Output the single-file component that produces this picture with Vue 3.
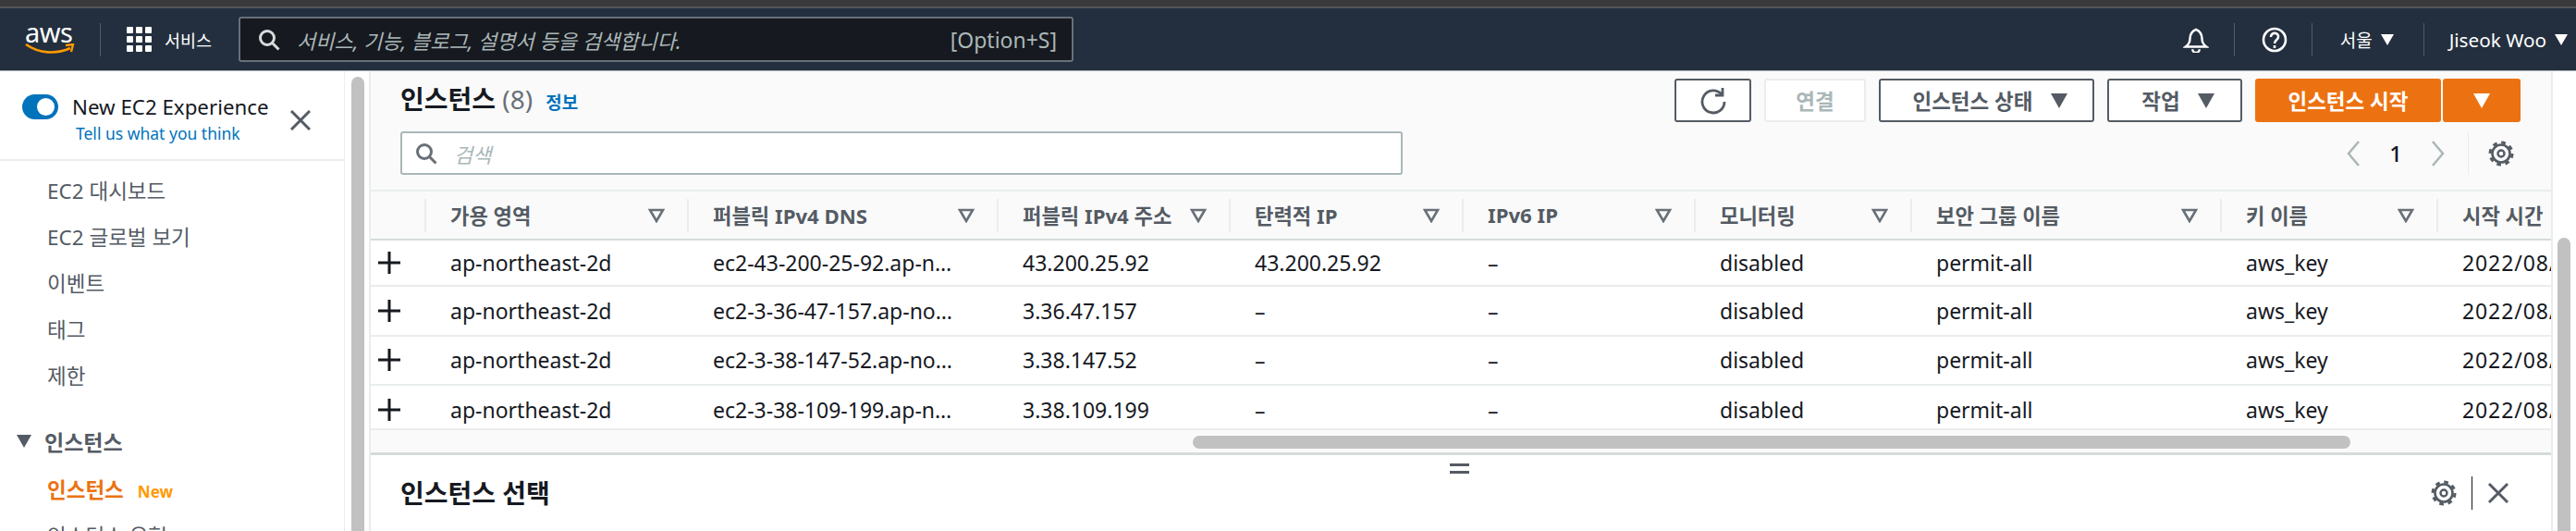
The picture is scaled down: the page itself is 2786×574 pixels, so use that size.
<script setup>
const nav = ["EC2 대시보드", "EC2 글로벌 보기", "이벤트", "태그", "제한"];
const cols = [
  "가용 영역",
  "퍼블릭 IPv4 DNS",
  "퍼블릭 IPv4 주소",
  "탄력적 IP",
  "IPv6 IP",
  "모니터링",
  "보안 그룹 이름",
  "키 이름",
  "시작 시간",
];
const rows = [
  ["ec2-43-200-25-92.ap-n…", "43.200.25.92", "43.200.25.92"],
  ["ec2-3-36-47-157.ap-no…", "3.36.47.157", "–"],
  ["ec2-3-38-147-52.ap-no…", "3.38.147.52", "–"],
  ["ec2-3-38-109-199.ap-n…", "3.38.109.199", "–"],
];
</script>

<template>
  <div class="page">
    <div class="strip"></div>
    <header class="topbar">
      <div class="logo">
        <span class="logo-text">aws</span>
        <svg viewBox="0 0 54 13" width="54" height="13" fill="none" stroke="#f90">
          <path d="M1 1c14 10 33 11 48 4" stroke-width="2.6" />
          <path d="M44 2l8-1-2 8" stroke-width="2.4" />
        </svg>
      </div>
      <span class="top-sep"></span>
      <svg class="grid-icon" viewBox="0 0 27 27" width="27" height="27">
        <g fill="#fff">
          <rect v-for="c in 9" :key="c" :x="((c - 1) % 3) * 10" :y="Math.floor((c - 1) / 3) * 10" width="7" height="7" rx="1" />
        </g>
      </svg>
      <span class="services">서비스</span>
      <div class="global-search">
        <svg viewBox="0 0 24 24" width="24" height="24" fill="none" stroke="#d5dbdb" stroke-width="3">
          <circle cx="10" cy="10" r="7.5" />
          <path d="M15.5 15.5l7 7" />
        </svg>
        <span class="global-ph">서비스, 기능, 블로그, 설명서 등을 검색합니다.</span>
        <span class="shortcut">[Option+S]</span>
      </div>
      <div class="top-right">
        <svg class="bell" viewBox="0 0 28 30" width="28" height="28" fill="none" stroke="#fff" stroke-width="2.6">
          <path d="M14 3c-5 2-7 6-7 11 0 4-2 7-5 9h24c-3-2-5-5-5-9 0-5-2-9-7-11z" />
          <path d="M10 26a4 4 0 0 0 8 0" />
        </svg>
        <span class="top-sep bell-sep"></span>
        <svg class="help" viewBox="0 0 28 28" width="28" height="28" fill="none" stroke="#fff" stroke-width="2.6">
          <circle cx="14" cy="14" r="12" />
          <path d="M10 11c0-6 9-5 8 0 0 3-4 3-4 7" />
          <path d="M14 20v3" />
        </svg>
        <span class="top-sep help-sep"></span>
        <span class="top-menu">서울</span>
        <span class="top-caret"></span>
        <span class="top-sep region-sep"></span>
        <span class="top-menu user">Jiseok Woo</span>
        <span class="top-caret"></span>
      </div>
    </header>

    <div class="body">
      <aside class="sidebar">
        <div class="experience">
          <span class="toggle"><span class="knob"></span></span>
          <div class="exp-text">
            <div class="exp-title">New EC2 Experience</div>
            <a class="exp-link">Tell us what you think</a>
          </div>
          <svg class="exp-close" viewBox="0 0 22 22" width="22" height="22" stroke="#545b64" stroke-width="3">
            <path d="M1 1l20 20M21 1L1 21" />
          </svg>
        </div>
        <nav class="nav">
          <a v-for="item in nav" :key="item" class="nav-item">{{ item }}</a>
          <div class="nav-section"><span class="section-caret"></span>인스턴스</div>
          <a class="nav-item active">인스턴스<span class="new">New</span></a>
          <a class="nav-item">인스턴스 유형</a>
        </nav>
      </aside>
      <div class="side-scroll"><span class="side-thumb"></span></div>

      <main class="main">
        <section class="panel">
          <div class="toolbar">
            <h2 class="title">인스턴스 <span class="count">(8)</span><a class="info">정보</a></h2>
            <div class="actions">
              <button class="btn icon-btn">
                <svg viewBox="0 0 30 30" width="30" height="30" fill="none" stroke="#545b64" stroke-width="2.8">
                  <path d="M24 8a12 12 0 1 0 3 8" />
                  <path d="M25 1v8h-8" />
                </svg>
              </button>
              <button class="btn disabled connect">연결</button>
              <button class="btn state">인스턴스 상태<span class="caret"></span></button>
              <button class="btn work">작업<span class="caret"></span></button>
              <div class="split">
                <button class="btn primary launch">인스턴스 시작</button>
                <button class="btn primary drop"><span class="caret white"></span></button>
              </div>
            </div>
          </div>
          <div class="filter-row">
            <div class="filter">
              <svg viewBox="0 0 24 24" width="24" height="24" fill="none" stroke="#687078" stroke-width="3">
                <circle cx="10" cy="10" r="7.5" />
                <path d="M15.5 15.5l7 7" />
              </svg>
              <span class="filter-ph">검색</span>
            </div>
            <div class="pager">
              <svg viewBox="0 0 14 30" width="14" height="30" fill="none" stroke="#aab7b8" stroke-width="2.5"><path d="M13 2L2 15l11 13" /></svg>
              <span class="page-num">1</span>
              <svg viewBox="0 0 14 30" width="14" height="30" fill="none" stroke="#aab7b8" stroke-width="2.5"><path d="M1 2l11 13L1 28" /></svg>
              <span class="pager-sep"></span>
              <svg viewBox="0 0 28 28" width="28" height="28" fill="none" stroke="#545b64">
                <circle cx="14" cy="14" r="12" stroke-width="3" stroke-dasharray="4.7 4.7" />
                <circle cx="14" cy="14" r="9.5" stroke-width="2.6" />
                <circle cx="14" cy="14" r="3.5" stroke-width="2.4" />
              </svg>
            </div>
          </div>

          <div class="table-wrap">
            <table class="table">
              <colgroup>
                <col class="c0" /><col class="c1" /><col class="c2" /><col class="c3" /><col class="c4" />
                <col class="c5" /><col class="c6" /><col class="c7" /><col class="c8" /><col class="c9" />
              </colgroup>
              <thead>
                <tr>
                  <th></th>
                  <th v-for="(c, i) in cols" :key="c">
                    <div class="th-inner">
                      <span>{{ c }}</span>
                      <svg v-if="i < 8" class="sort" viewBox="0 0 18 16" width="18" height="16" fill="none" stroke="#687078" stroke-width="2.6">
                        <path d="M2 2h14L9 14z" />
                      </svg>
                    </div>
                  </th>
                </tr>
              </thead>
              <tbody>
                <tr v-for="r in rows" :key="r[0]">
                  <td class="plus-cell">
                    <svg viewBox="0 0 24 24" width="24" height="24" stroke="#16191f" stroke-width="3"><path d="M12 0v24M0 12h24" /></svg>
                  </td>
                  <td>ap-northeast-2d</td>
                  <td>{{ r[0] }}</td>
                  <td>{{ r[1] }}</td>
                  <td>{{ r[2] }}</td>
                  <td>–</td>
                  <td>disabled</td>
                  <td>permit-all</td>
                  <td>aws_key</td>
                  <td class="date">2022/08/</td>
                </tr>
              </tbody>
            </table>
          </div>
          <div class="h-scroll"><span class="h-thumb"></span></div>
        </section>

        <section class="detail">
          <span class="drag"></span>
          <h2 class="title">인스턴스 선택</h2>
          <div class="detail-tools">
            <svg viewBox="0 0 28 28" width="28" height="28" fill="none" stroke="#545b64">
              <circle cx="14" cy="14" r="12" stroke-width="3" stroke-dasharray="4.7 4.7" />
              <circle cx="14" cy="14" r="9.5" stroke-width="2.6" />
              <circle cx="14" cy="14" r="3.5" stroke-width="2.4" />
            </svg>
            <span class="tool-sep"></span>
            <svg viewBox="0 0 24 24" width="24" height="24" stroke="#545b64" stroke-width="3">
              <path d="M2 2l20 20M22 2L2 22" />
            </svg>
          </div>
        </section>
      </main>
      <div class="right-gutter"><span class="right-thumb"></span></div>
    </div>
  </div>
</template>

<style scoped>
.page {
  width: 2786px;
  height: 574px;
  overflow: hidden;
  display: flex;
  flex-direction: column;
  font-family: "Noto Sans", "Noto Sans CJK KR", sans-serif;
  font-size: 23px;
  color: #16191f;
  background: #fff;
}
.strip {
  height: 9px;
  flex: none;
  background: #39393b;
  border-bottom: 2px solid #555;
  box-sizing: border-box;
}
.topbar {
  height: 68px;
  flex: none;
  display: flex;
  align-items: center;
  padding-left: 27px;
  background: #232f3e;
  border-bottom: 1px solid #aab7b8;
  box-sizing: border-box;
  color: #fff;
}
.logo {
  width: 54px;
  flex: none;
  display: flex;
  flex-direction: column;
}
.logo-text {
  height: 22px;
  font-size: 29px;
  line-height: 20px;
  letter-spacing: -0.5px;
}
.logo svg {
  display: block;
}
.top-sep {
  width: 1px;
  height: 36px;
  margin: 0 28px 0 27px;
  background: #545b64;
}
.grid-icon {
  flex: none;
}
.services {
  margin-left: 14px;
  font-size: 18.5px;
}
.global-search {
  margin-left: 29px;
  width: 903px;
  height: 49px;
  box-sizing: border-box;
  display: flex;
  align-items: center;
  padding: 0 16px 0 19px;
  background: #16191f;
  border: 2px solid #687078;
  border-radius: 3px;
}
.global-ph {
  margin-left: 18px;
  flex: 1;
  font-style: italic;
  font-size: 22px;
  color: #aab7b8;
}
.shortcut {
  font-size: 23px;
  color: #aab7b8;
}
.top-right {
  margin-left: auto;
  padding-right: 9px;
  display: flex;
  align-items: center;
}
.top-right .top-sep {
  margin: 0;
}
.top-right .bell-sep {
  margin: 0 29px 0 27px;
}
.top-right .help-sep {
  margin: 0 30px 0 26px;
}
.top-right .region-sep {
  margin: 0 27px 0 32px;
}
.top-menu {
  font-size: 19px;
}
.top-menu.user {
  font-size: 20.7px;
}
.top-caret {
  margin-left: 9px;
  width: 0;
  height: 0;
  border-left: 7px solid transparent;
  border-right: 7px solid transparent;
  border-top: 12px solid #fff;
}
.body {
  flex: 1;
  display: flex;
  min-height: 0;
}
.sidebar {
  width: 373px;
  flex: none;
  box-sizing: border-box;
  border-right: 1px solid #eaeded;
}
.experience {
  height: 97px;
  box-sizing: border-box;
  display: flex;
  padding: 25px 0 0 24px;
  border-bottom: 2px solid #eaeded;
}
.toggle {
  width: 39px;
  height: 27px;
  flex: none;
  border-radius: 14px;
  background: #0073bb;
  position: relative;
}
.knob {
  position: absolute;
  right: 4px;
  top: 4px;
  width: 19px;
  height: 19px;
  border-radius: 50%;
  background: #fff;
}
.exp-text {
  margin-left: 15px;
}
.exp-title {
  font-size: 22.3px;
  line-height: 28px;
}
.exp-link {
  display: block;
  margin-top: 2px;
  margin-left: 4px;
  font-size: 17.5px;
  line-height: 24px;
  color: #0073bb;
}
.exp-close {
  margin: 17px 0 0 23px;
}
.nav {
  padding-top: 6px;
  display: flex;
  flex-direction: column;
}
.nav-item {
  height: 50px;
  flex: none;
  padding-left: 51px;
  display: flex;
  align-items: center;
  color: #545b64;
  font-size: 22.5px;
}
.nav-section {
  margin-top: 21px;
  height: 52px;
  flex: none;
  display: flex;
  align-items: center;
  padding-left: 18px;
  font-weight: 700;
  color: #545b64;
}
.section-caret {
  width: 0;
  height: 0;
  margin-right: 14px;
  border-left: 8px solid transparent;
  border-right: 8px solid transparent;
  border-top: 14px solid #545b64;
}
.nav-item.active {
  color: #ec7211;
  font-weight: 700;
}
.new {
  margin-left: 15px;
  margin-top: 6px;
  font-size: 17px;
  color: #ff9900;
}
.side-scroll {
  width: 26px;
  flex: none;
  padding: 6px 0 0 7px;
  box-sizing: border-box;
}
.side-thumb {
  display: block;
  width: 14px;
  height: 520px;
  border-radius: 7px;
  background: #c1c1c1;
}
.main {
  width: 1361px;
  flex: 1;
  min-width: 0;
  border-left: 2px solid #eaeded;
  border-right: 2px solid #eaeded;
  display: flex;
  flex-direction: column;
}
.panel {
  background: #fafafa;
  flex: none;
}
.toolbar {
  height: 65px;
  box-sizing: border-box;
  padding: 8px 33px 0 32px;
  display: flex;
  align-items: flex-start;
  justify-content: space-between;
}
.title {
  margin: 0;
  font-size: 28px;
  font-weight: 700;
  line-height: 44px;
  color: #16191f;
}
.count {
  font-weight: 400;
  color: #687078;
}
.info {
  margin-left: 14px;
  font-size: 19px;
  color: #0073bb;
}
.actions {
  display: flex;
  gap: 14px;
}
.btn {
  height: 47px;
  box-sizing: border-box;
  background: #fff;
  border: 2px solid #545b64;
  border-radius: 3px;
  font: 700 22.5px "Noto Sans", "Noto Sans CJK KR", sans-serif;
  color: #545b64;
  display: flex;
  align-items: center;
  justify-content: center;
  padding: 0;
}
.icon-btn {
  width: 83px;
}
.connect {
  width: 110px;
}
.btn.disabled {
  border-color: #eaeded;
  color: #aab7b8;
}
.state {
  width: 233px;
  padding-left: 7px;
}
.work {
  width: 146px;
  padding-left: 7px;
}
.caret {
  margin-left: 19px;
  width: 0;
  height: 0;
  border-left: 9px solid transparent;
  border-right: 9px solid transparent;
  border-top: 16px solid #545b64;
}
.caret.white {
  margin: 0;
  border-top-color: #fff;
}
.split {
  display: flex;
  gap: 2px;
}
.primary {
  background: #ec7211;
  border-color: #ec7211;
  color: #fff;
}
.launch {
  width: 201px;
}
.drop {
  width: 84px;
}
.filter-row {
  height: 63px;
  padding-left: 32px;
  display: flex;
  align-items: flex-start;
  justify-content: space-between;
}
.filter {
  width: 1084px;
  height: 47px;
  box-sizing: border-box;
  background: #fff;
  border: 2px solid #aab7b8;
  border-radius: 3px;
  display: flex;
  align-items: center;
  padding-left: 14px;
}
.filter-ph {
  margin-left: 18px;
  font-style: italic;
  font-size: 22px;
  color: #aab7b8;
}
.pager {
  display: flex;
  align-items: center;
  height: 47px;
  padding-right: 40px;
}
.page-num {
  margin: 0 32px;
  font-weight: 500;
  font-size: 24px;
}
.pager-sep {
  width: 1px;
  height: 46px;
  margin: 0 21px 0 25px;
  background: #eaeded;
}
.table-wrap {
  overflow: hidden;
}
.table {
  width: 2359px;
  table-layout: fixed;
  border-collapse: collapse;
}
.c0 { width: 58px; }
.c1 { width: 284px; }
.c2 { width: 335px; }
.c3 { width: 251px; }
.c4 { width: 252px; }
.c5 { width: 251px; }
.c6 { width: 234px; }
.c7 { width: 335px; }
.c8 { width: 234px; }
.c9 { width: 125px; }
th {
  height: 53px;
  box-sizing: border-box;
  padding: 0;
  border-top: 2px solid #eaeded;
  border-bottom: 2px solid #d5dbdb;
  text-align: left;
  font-size: 22.2px;
  font-weight: 700;
  color: #545b64;
  background: #fafafa;
}
.th-inner {
  height: 36px;
  box-sizing: border-box;
  display: flex;
  align-items: center;
  justify-content: space-between;
  padding: 0 24px 0 26px;
  border-left: 2px solid #eaeded;
  white-space: nowrap;
}
th:last-child .th-inner {
  padding-right: 0;
}
td {
  height: 53.5px;
  padding: 0 0 0 28px;
  box-sizing: border-box;
  border-bottom: 2px solid #eaeded;
  background: #fff;
  white-space: nowrap;
  overflow: hidden;
}
tbody tr:first-child td {
  height: 50px;
}
tbody tr:last-child td {
  height: 48px;
  padding-top: 6px;
}
td.plus-cell {
  padding-left: 8px;
}
td.date {
  letter-spacing: 0.9px;
}
td svg {
  display: block;
}
.h-scroll {
  height: 27px;
  box-sizing: border-box;
  padding: 6px 0 0 889px;
  border-bottom: 3px solid #d5dbdb;
}
.h-thumb {
  display: block;
  width: 1252px;
  height: 14px;
  border-radius: 7px;
  background: #c1c1c1;
}
.detail {
  flex: 1;
  position: relative;
  display: flex;
  align-items: center;
  justify-content: space-between;
  padding: 0 45px 0 32px;
  background: #fff;
}
.drag {
  position: absolute;
  left: 1167px;
  top: 9px;
  width: 21px;
  height: 5px;
  border-top: 3px solid #545b64;
  border-bottom: 3px solid #545b64;
}
.detail-tools {
  display: flex;
  align-items: center;
}
.tool-sep {
  width: 1px;
  height: 36px;
  margin: 0 16px;
  background: #16191f;
}
.right-gutter {
  width: 25px;
  flex: none;
  padding: 180px 0 0 5px;
  box-sizing: border-box;
}
.right-thumb {
  display: block;
  width: 14px;
  height: 400px;
  border-radius: 7px 7px 0 0;
  background: #c1c1c1;
}
</style>
